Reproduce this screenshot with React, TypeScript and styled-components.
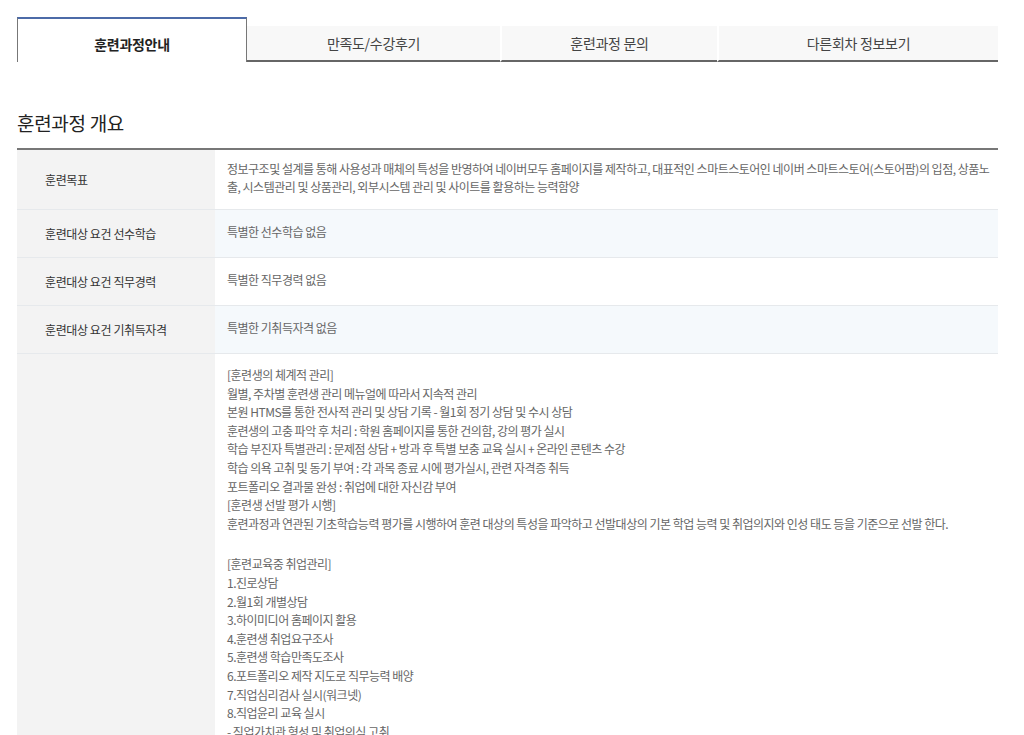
import styled, {createGlobalStyle} from 'styled-components'

const GlobalStyle = createGlobalStyle`
  body {
    margin: 0;
    background: #fff;
    font-family: 'Noto Sans CJK KR', 'Noto Sans', sans-serif;
    color: #333;
  }
`

const tabs = ['훈련과정안내', '만족도/수강후기', '훈련과정 문의', '다른회차 정보보기']

const rows: {label: string; lines: string[]; tint?: boolean; loose?: boolean}[] = [
  {
    label: '훈련목표',
    lines: [
      '정보구조및 설계를 통해 사용성과 매체의 특성을 반영하여 네이버모두 홈페이지를 제작하고, 대표적인 스마트스토어인 네이버 스마트스토어(스토어팜)의 입점, 상품노출, 시스템관리 및 상품관리, 외부시스템 관리 및 사이트를 활용하는 능력함양'
    ]
  },
  {label: '훈련대상 요건 선수학습', lines: ['특별한 선수학습 없음'], tint: true},
  {label: '훈련대상 요건 직무경력', lines: ['특별한 직무경력 없음']},
  {label: '훈련대상 요건 기취득자격', lines: ['특별한 기취득자격 없음'], tint: true},
  {
    label: '훈련생 관리 및 취업지원',
    loose: true,
    lines: [
      '[훈련생의 체계적 관리]',
      '월별, 주차별 훈련생 관리 메뉴얼에 따라서 지속적 관리',
      '본원 HTMS를 통한 전사적 관리 및 상담 기록 - 월1회 정기 상담 및 수시 상담',
      '훈련생의 고충 파악 후 처리 : 학원 홈페이지를 통한 건의함, 강의 평가 실시',
      '학습 부진자 특별관리 : 문제점 상담 + 방과 후 특별 보충 교육 실시 + 온라인 콘텐츠 수강',
      '학습 의욕 고취 및 동기 부여 : 각 과목 종료 시에 평가실시, 관련 자격증 취득',
      '포트폴리오 결과물 완성 : 취업에 대한 자신감 부여',
      '[훈련생 선발 평가 시행]',
      '훈련과정과 연관된 기초학습능력 평가를 시행하여 훈련 대상의 특성을 파악하고 선발대상의 기본 학업 능력 및 취업의지와 인성 태도 등을 기준으로 선발 한다.',
      '',
      '[훈련교육중 취업관리]',
      '1.진로상담',
      '2.월1회 개별상담',
      '3.하이미디어 홈페이지 활용',
      '4.훈련생 취업요구조사',
      '5.훈련생 학습만족도조사',
      '6.포트폴리오 제작 지도로 직무능력 배양',
      '7.직업심리검사 실시(워크넷)',
      '8.직업윤리 교육 실시',
      '- 직업가치관 형성 및 취업의식 고취',
      '9.취업특강 실시',
      '10.이력서 및 자기소개서 작성 지도',
      '11.모의면접 실시',
      '12.기업체 현장 견학',
      '13.취업박람회 참가 안내',
      '',
      '[수료 후 취업관리]',
      '1.취업지원팀 연계 구인정보 제공',
      '2.수료생 사후관리 및 취업알선',
      '3.취업처 방문 및 만족도 조사',
      '4.수료생 네트워크 관리',
      '5.재취업 지원 상담',
      '6.기업체 연계 채용설명회',
      '7.취업 후 적응 상담',
      '8.동문 멘토링 프로그램 운영',
      '9.추가 교육과정 안내',
      '10.우수 수료생 추천',
      '11.취업 현황 관리 및 보고',
      '12.사후 만족도 조사',
      '13.경력개발 상담',
      '14.온라인 취업정보 제공',
      '15.수료생 취업 사례 공유',
      '16.기업 맞춤 인재 추천'
    ]
  }
]

export default function App() {
  return (
    <Page>
      <GlobalStyle />
      <TabBar>
        {tabs.map((t, i) => (
          <Tab key={t} active={i === 0} afterActive={i === 1}>
            {t}
          </Tab>
        ))}
      </TabBar>
      <Heading>훈련과정 개요</Heading>
      <Table>
        {rows.map(r => (
          <Row key={r.label}>
            <Label>{r.label}</Label>
            <Content tint={r.tint} loose={r.loose}>
              {r.lines.map((l, i) =>
                l ? <Line key={i}>{l}</Line> : <Blank key={i} />
              )}
            </Content>
          </Row>
        ))}
      </Table>
    </Page>
  )
}

const Page = styled.div`
  width: 981px;
  padding: 17px 0 0 17px;
`

const TabBar = styled.div`
  display: grid;
  grid-template-columns: 230px 253px 217px 1fr;
  align-items: end;
`

const Tab = styled.div<{active: boolean; afterActive: boolean}>`
  display: flex;
  align-items: center;
  justify-content: center;
  font-size: 14px;
  letter-spacing: -0.3px;
  color: ${({active}) => (active ? '#222' : '#444')};
  font-weight: ${({active}) => (active ? 700 : 400)};
  box-sizing: border-box;
  ${({active, afterActive}) =>
    active
      ? `
    height: 45px;
    padding-top: 7px;
    background: #fff;
    border-top: 2px solid #4c6ba8;
    border-left: 1px solid #777;
    border-right: 1px solid #777;
  `
      : `
    height: 36px;
    background: #f8f8f8;
    border-bottom: 2px solid #666;
    border-left: ${afterActive ? '0' : '2px solid #fff'};
  `}
`

const Heading = styled.h2`
  margin: 48px 0 0;
  font-size: 19px;
  font-weight: 400;
  line-height: 26px;
  letter-spacing: -0.3px;
  color: #222;
`

const Table = styled.div`
  margin-top: 12px;
  border-top: 2px solid #777;
`

const Row = styled.div`
  display: grid;
  grid-template-columns: 198px 1fr;
  border-bottom: 1px solid #e6e9ec;
`

const Label = styled.div`
  display: flex;
  align-items: center;
  padding-left: 28px;
  background: #f3f3f3;
  font-size: 12px;
  letter-spacing: -0.4px;
  color: #333;
`

const Content = styled.div<{tint?: boolean; loose?: boolean}>`
  padding: ${({loose}) => (loose ? '12px 4px 12px' : '10px 4px 13px')} 12px;
  min-height: 24px;
  background: ${({tint}) => (tint ? '#f5f9fc' : '#fff')};
  font-size: 12px;
  line-height: ${({loose}) => (loose ? '18.6px' : '18px')};
  letter-spacing: -0.5px;
  color: #666;
  display: flex;
  flex-direction: column;
  justify-content: center;
`

const Line = styled.div``

const Blank = styled.div`
  height: 22px;
`
